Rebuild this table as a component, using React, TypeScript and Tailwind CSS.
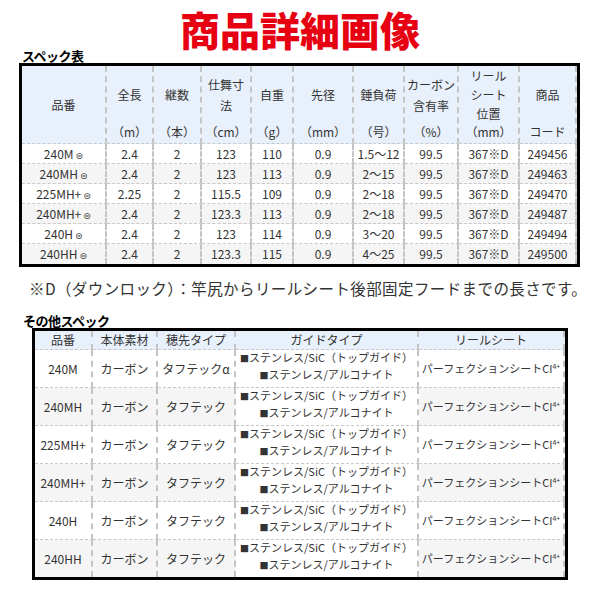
import React from "react";

// spec rows for the main table
const specs = [
  { name: "240M", len: "2.4", pcs: "2", close: "123", wt: "110", tip: "0.9", lure: "1.5〜12", carbon: "99.5", seat: "367※D", code: "249456" },
  { name: "240MH", len: "2.4", pcs: "2", close: "123", wt: "113", tip: "0.9", lure: "2〜15", carbon: "99.5", seat: "367※D", code: "249463" },
  { name: "225MH+", len: "2.25", pcs: "2", close: "115.5", wt: "109", tip: "0.9", lure: "2〜18", carbon: "99.5", seat: "367※D", code: "249470" },
  { name: "240MH+", len: "2.4", pcs: "2", close: "123.3", wt: "113", tip: "0.9", lure: "2〜18", carbon: "99.5", seat: "367※D", code: "249487" },
  { name: "240H", len: "2.4", pcs: "2", close: "123", wt: "114", tip: "0.9", lure: "3〜20", carbon: "99.5", seat: "367※D", code: "249494" },
  { name: "240HH", len: "2.4", pcs: "2", close: "123.3", wt: "115", tip: "0.9", lure: "4〜25", carbon: "99.5", seat: "367※D", code: "249500" },
];

const others = [
  { name: "240M", tip: "タフテックα" },
  { name: "240MH", tip: "タフテック" },
  { name: "225MH+", tip: "タフテック" },
  { name: "240MH+", tip: "タフテック" },
  { name: "240H", tip: "タフテック" },
  { name: "240HH", tip: "タフテック" },
];

// header columns: label lines + unit
const heads = [
  { label: ["全長"], unit: "（m）" },
  { label: ["継数"], unit: "（本）" },
  { label: ["仕舞寸", "法"], unit: "（cm）" },
  { label: ["自重"], unit: "（g）" },
  { label: ["先径"], unit: "（mm）" },
  { label: ["錘負荷"], unit: "（号）" },
  { label: ["カーボン", "含有率"], unit: "（%）" },
  { label: ["リール", "シート", "位置"], unit: "（mm）" },
  { label: ["商品"], unit: "コード" },
];

const font = "font-['Noto_Sans_CJK_JP',sans-serif]";
const cell = "border-r-2 border-r-[#c4c4c4] border-b border-b-[#c8c8c8] border-dashed p-0 text-center align-middle";

const labelLeading = (n: number) =>
  n === 3 ? "leading-[19px]" : n === 2 ? "leading-[21px]" : "leading-[18px]";

const App: React.FC = () => {
  return (
    <div className={`w-[600px] h-[600px] bg-white text-[#333] ${font}`}>
      {/* Title */}
      <div className="h-[48px] pt-[9px] text-center text-[40px] leading-[40px] font-black text-[#e60012]">
        商品詳細画像
      </div>
      <div className="h-[15px] pl-[22px] text-[13px] leading-[15px] font-bold tracking-[-0.5px] text-black">
        スペック表
      </div>

      {/* Spec table */}
      <table className="ml-[19px] w-[561px] table-fixed border-separate border-spacing-0 border-[3px] border-black text-[12px]">
        <colgroup>
          <col className="w-[85px]" />
          <col className="w-[47px]" />
          <col className="w-[48px]" />
          <col className="w-[50px]" />
          <col className="w-[42px]" />
          <col className="w-[60px]" />
          <col className="w-[51px]" />
          <col className="w-[54px]" />
          <col className="w-[61px]" />
          <col />
        </colgroup>
        <thead className="bg-[#e8f0fb]">
          <tr>
            <th className={`${cell} h-[77px] font-normal`}>品番</th>
            {heads.map((h, i) => (
              <th key={i} className={`${cell} font-normal ${i === heads.length - 1 ? "border-r-0" : ""}`}>
                <div className="flex h-[77px] flex-col">
                  <div className={`flex flex-1 flex-col items-center justify-center ${labelLeading(h.label.length)}`}>
                    {h.label.map((l) => (
                      <div key={l} className="whitespace-nowrap">{l}</div>
                    ))}
                  </div>
                  <div className="h-[20px] leading-[18px] whitespace-nowrap">{h.unit}</div>
                </div>
              </th>
            ))}
          </tr>
        </thead>
        <tbody>
          {specs.map((s, i) => {
            const last = i === specs.length - 1;
            const bg = i % 2 === 1 ? "bg-[#f5f5f5]" : "bg-white";
            const c = `${cell} ${last ? "border-b-0" : ""}`;
            return (
              <tr key={s.name} className={`h-[20px] leading-[16px] ${bg}`}>
                <td className={c}>
                  {s.name}
                  <span className="ml-[2px] text-[9px] leading-[9px] font-['DejaVu_Sans',sans-serif]">⊜</span>
                </td>
                <td className={c}>{s.len}</td>
                <td className={c}>{s.pcs}</td>
                <td className={c}>{s.close}</td>
                <td className={c}>{s.wt}</td>
                <td className={c}>{s.tip}</td>
                <td className={c}>{s.lure}</td>
                <td className={c}>{s.carbon}</td>
                <td className={c}>{s.seat}</td>
                <td className={`${c} border-r-0`}>{s.code}</td>
              </tr>
            );
          })}
        </tbody>
      </table>

      {/* Note */}
      <div className="mt-[12px] h-[18px] whitespace-nowrap pl-[29px] text-[15.5px] leading-[18px] tracking-[0.4px] text-[#333]">
        ※D（ダウンロック）：竿尻からリールシート後部固定フードまでの長さです。
      </div>

      <div className="mt-[17px] h-[14px] pl-[23px] text-[13px] leading-[14px] font-bold tracking-[-0.5px] text-black">
        その他スペック
      </div>

      {/* Other spec table */}
      <table className="ml-[32px] w-[536px] table-fixed border-separate border-spacing-0 border-[3px] border-black text-[12px]">
        <colgroup>
          <col className="w-[58px]" />
          <col className="w-[65px]" />
          <col className="w-[78px]" />
          <col className="w-[183px]" />
          <col />
        </colgroup>
        <thead className="bg-[#e8f0fb]">
          <tr className="h-[19px] leading-[16px]">
            <th className={`${cell} font-normal`}>品番</th>
            <th className={`${cell} font-normal`}>本体素材</th>
            <th className={`${cell} font-normal`}>穂先タイプ</th>
            <th className={`${cell} font-normal`}>ガイドタイプ</th>
            <th className={`${cell} border-r-0 font-normal`}>リールシート</th>
          </tr>
        </thead>
        <tbody>
          {others.map((o, i) => {
            const last = i === others.length - 1;
            const bg = i % 2 === 1 ? "bg-[#f5f5f5]" : "bg-white";
            const c = `${cell} ${last ? "border-b-0" : ""}`;
            return (
              <tr key={o.name} className={`leading-[16px] ${bg}`}>
                <td className={c}>{o.name}</td>
                <td className={c}>カーボン</td>
                <td className={c}>{o.tip}</td>
                <td className={`${c} bg-white text-[11px]`}>
                  <div className="flex h-[37px] flex-col items-center overflow-hidden">
                    <div className="-mt-[1px] h-[17px] whitespace-nowrap leading-[17px]">
                      <span className="text-[9px]">■</span>ステンレス/SiC（トップガイド）
                    </div>
                    <div className="h-[17px] whitespace-nowrap leading-[17px]">
                      <span className="text-[9px]">■</span>ステンレス/アルコナイト
                    </div>
                  </div>
                </td>
                <td className={`${c} border-r-0 whitespace-nowrap text-[11px]`}>
                  パーフェクションシートCI<span className="relative -top-[4px] text-[7px]">4+</span>
                </td>
              </tr>
            );
          })}
        </tbody>
      </table>
    </div>
  );
};

export default App;
